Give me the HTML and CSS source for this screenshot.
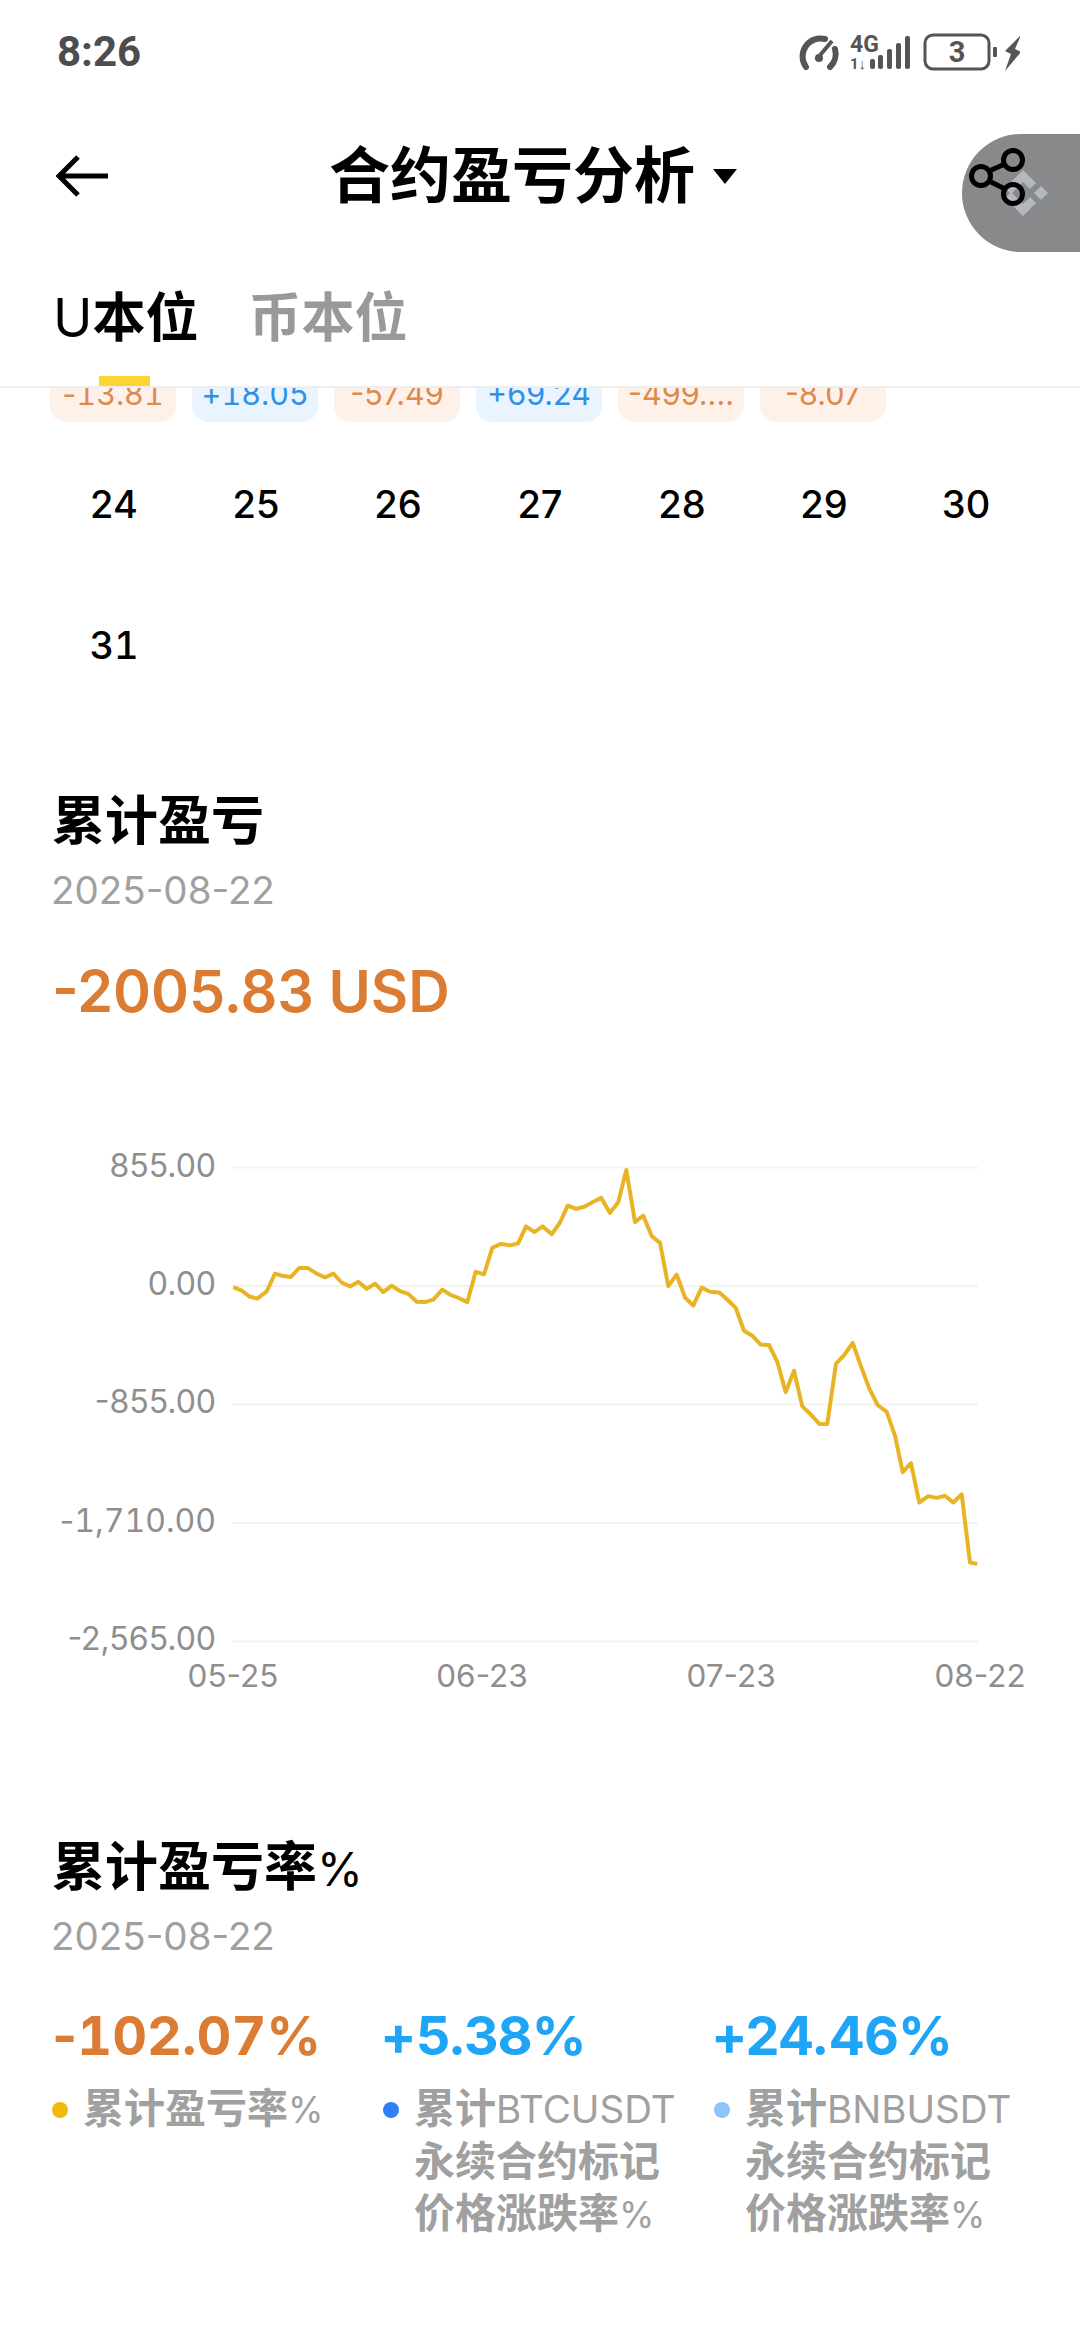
FILE: index.html
```html
<!DOCTYPE html>
<html>
<head>
	<meta charset='utf-8'>
	<title>合约盈亏分析</title>
	<link rel="stylesheet" href="styles.css">
</head>
<body>

	<div class="status">
		<span class="time">8:26</span>
		<svg class="status-icons" width="230" height="40" viewBox="790 30 230 40">
			<!-- gauge -->
			<path d="M806 65 A18 18 0 0 1 825 37" class="st-line"/>
			<path d="M835 47 A18 18 0 0 1 830 65" class="st-line"/>
			<path d="M816 58 L832 39" class="st-needle"/>
			<circle cx="819" cy="56" r="4" class="st-fill"/>
			<!-- network -->
			<text x="850" y="50" class="st-net">4G</text>
			<text x="850" y="67" class="st-net-small">1↓</text>
			<rect x="870" y="57" width="5" height="10" rx="2" class="st-fill"/>
			<rect x="878" y="53" width="5" height="14" rx="2" class="st-fill"/>
			<rect x="887" y="47" width="5" height="20" rx="2" class="st-fill"/>
			<rect x="896" y="41" width="5" height="26" rx="2" class="st-fill"/>
			<rect x="905" y="34" width="5" height="33" rx="2" class="st-fill"/>
			<!-- battery -->
			<rect x="925" y="33" width="64" height="34" rx="8" class="st-batt"/>
			<text x="957" y="60" class="st-level">3</text>
			<rect x="993" y="45" width="4" height="10" rx="1" class="st-fill"/>
			<path d="M1021 33 L1005 49 L1011 52 L1005 69 L1021 50 L1015 47 Z" class="st-fill"/>
		</svg>
	</div>

	<div class="header">
		<svg class="back" width="54" height="44" viewBox="0 0 54 44">
			<path d="M52 22 H4 M22 3 L3 22 L22 41" />
		</svg>
		<div class="title">合约盈亏分析<span class="caret"></span></div>
	</div>

	<div class="float-btn">
		<svg width="118" height="118" viewBox="962 134 118 118">
			<g class="bn-logo">
				<path d="M1023 170 L1036 183 L1030 189 L1023 182 L1011 194 L1005 188 Z"/>
				<path d="M1023 216 L1036 203 L1030 197 L1023 204 L1011 192 L1005 198 Z"/>
				<path d="M1041 186 L1048 193 L1041 200 L1034 193 Z"/>
			</g>
			<g class="share">
				<circle cx="1013" cy="160" r="9.5"/>
				<circle cx="981" cy="176" r="9.5"/>
				<circle cx="1013" cy="194" r="9.5"/>
				<path d="M989 171 L1005 164 M989 181 L1005 189"/>
			</g>
		</svg>
	</div>

	<div class="tabs">
		<div class="tab active"><span class="latin">U</span>本位<i class="tab-bar"></i></div>
		<div class="tab">币本位</div>
	</div>

	<div class="chips">
		<div class="chip loss">-<span class="tnum">13.81</span></div>
		<div class="chip gain">+<span class="tnum">18.05</span></div>
		<div class="chip loss">-57.49</div>
		<div class="chip gain">+69.24</div>
		<div class="chip loss">-499....</div>
		<div class="chip loss">-8.07</div>
	</div>

	<div class="days">
		<div>24</div><div>25</div><div>26</div><div>27</div><div>28</div><div>29</div><div>30</div>
		<div class="tnum">31</div>
	</div>

	<h2 class="sec-title first">累计盈亏</h2>
	<div class="sec-date">2025-08-22</div>
	<div class="big-value">-2005.83 USD</div>

	<svg class="chart" width="1080" height="580" viewBox="0 1120 1080 580">
		<g class="grid">
			<path d="M232 1167.5 H978 M232 1286 H978 M232 1404.5 H978 M232 1523 H978 M232 1641.5 H978"/>
		</g>
		<g class="y-axis">
			<text x="216" y="1177">855.00</text>
			<text x="216" y="1295">0.00</text>
			<text x="216" y="1413">-855.00</text>
			<text x="216" y="1532">-<tspan class="tnum">1,710.00</tspan></text>
			<text x="216" y="1650">-2,565.00</text>
		</g>
		<g class="x-axis">
			<text x="233" y="1687">05-25</text>
			<text x="482" y="1687">06-23</text>
			<text x="731" y="1687">07-23</text>
			<text x="980" y="1687">08-22</text>
		</g>
		<polyline class="pnl-line" points="233.3,1287.1 241.7,1290.7 250,1296.8 257.3,1298.6 266.7,1291.4 275,1273.6 283.3,1276.1 290.7,1277.1 299.3,1267.9 307.7,1267.9 316.7,1273.6 325,1277.5 333.3,1273.6 341.7,1282.5 350,1286.4 358.3,1281.8 366.7,1288.9 375,1283.6 383.3,1292.1 391.7,1285.7 400,1291.1 408.3,1293.9 416.7,1301.8 425,1302.1 433.3,1299.6 442.3,1289.6 450.7,1295 459,1298.2 467.3,1302.1 475.7,1271.8 484,1274.3 492.3,1247.9 500.7,1243.9 510,1245.4 518.3,1243.2 526,1226.4 534.3,1232.1 542.7,1226.4 551.7,1234.3 560,1222.5 567.7,1205.7 576,1208.9 584.3,1206.8 593.3,1201.8 601.3,1197.9 610,1212.9 618.3,1202.1 626.3,1170 635,1222.1 643.3,1215.7 651.7,1236.1 660,1242.9 668.3,1286.1 676.7,1274.6 685,1297.5 693.3,1305.7 701.7,1287.5 710,1291.8 719.3,1292.5 727.7,1300 735.7,1307.9 744,1330.7 752.3,1335.7 760.7,1344.6 769,1345 777.3,1361.8 785.7,1392.1 794,1370.7 802.3,1406.4 810.7,1414.3 819.3,1423.9 827.3,1423.9 836,1363.6 844.3,1355 852.7,1342.9 861,1366.4 869.3,1388.6 877.7,1405 886.7,1411.8 895,1435.7 902.7,1472.1 911,1463.2 919.3,1502.5 928.3,1496.1 936.7,1497.9 945,1495.7 953.3,1502.5 961.7,1494.3 970,1562.5 977.3,1563.9"/>
	</svg>

	<h2 class="sec-title second">累计盈亏率<span class="pct">%</span></h2>
	<div class="sec-date">2025-08-22</div>

	<div class="rates">
		<div class="rate">
			<div class="rate-value orange">-<span class="tnum">102.07</span>%</div>
			<div class="rate-label"><i class="dot dot-yellow"></i><div>累计盈亏率<span class="pct">%</span></div></div>
		</div>
		<div class="rate">
			<div class="rate-value blue">+5.38%</div>
			<div class="rate-label"><i class="dot dot-blue"></i><div>累计<span class="latin">BTCUSDT</span><br>永续合约标记<br>价格涨跌率<span class="pct">%</span></div></div>
		</div>
		<div class="rate">
			<div class="rate-value blue">+24.46%</div>
			<div class="rate-label"><i class="dot dot-light"></i><div>累计<span class="latin">BNBUSDT</span><br>永续合约标记<br>价格涨跌率<span class="pct">%</span></div></div>
		</div>
	</div>

</body>
</html>
```

FILE: styles.css
```css
*{
	box-sizing: border-box;
}
body{
	margin: 0;
	width: 1080px;
	height: 2340px;
	overflow: hidden;
	background-color: #fff;
	color: #000;
	font-family: Inter, "Noto Sans CJK SC", sans-serif;
}
.latin{
	font-weight: 400;
	line-height: 0;
}
.pct{
	font-size: 0.88em;
	font-weight: 400;
	line-height: 0;
}
.tnum{
	font-variant-numeric: tabular-nums;
}

/* status bar */
.status{
	height: 104px;
	padding: 32px 60px 0 57px;
	display: flex;
	justify-content: space-between;
	align-items: flex-start;
}
.time{
	font-family: Roboto, sans-serif;
	font-size: 42px;
	font-weight: 700;
	line-height: 40px;
	color: #4d4d4d;
}
.st-line{
	fill: none;
	stroke: #555;
	stroke-width: 6;
	stroke-linecap: round;
}
.st-needle{
	fill: none;
	stroke: #555;
	stroke-width: 4;
}
.st-fill{
	fill: #555;
}
.st-batt{
	fill: none;
	stroke: #555;
	stroke-width: 3;
}
.st-net{
	font-family: Roboto, sans-serif;
	font-size: 23px;
	font-weight: 700;
	fill: #555;
}
.st-net-small{
	font-family: Roboto, sans-serif;
	font-size: 15px;
	font-weight: 700;
	fill: #555;
}
.st-level{
	font-family: Roboto, sans-serif;
	font-size: 29px;
	font-weight: 700;
	fill: #555;
	text-anchor: middle;
}

/* header */
.header{
	height: 144px;
	padding-left: 56px;
	display: flex;
	align-items: center;
}
.back{
	flex: none;
}
.back path{
	fill: none;
	stroke: #000;
	stroke-width: 5;
}
.title{
	margin-left: 219px;
	font-size: 61px;
	line-height: 70px;
	font-weight: 700;
	display: flex;
	align-items: center;
}
.caret{
	margin-left: 18px;
	width: 0;
	height: 0;
	border-left: 12px solid transparent;
	border-right: 12px solid transparent;
	border-top: 15px solid #000;
}
.float-btn{
	position: absolute;
	left: 962px;
	top: 134px;
	width: 118px;
	height: 118px;
	border-radius: 59px 0 0 59px;
	background-color: #87898b;
}
.float-btn svg{
	display: block;
}
.bn-logo{
	fill: #b4b8bd;
}
.share{
	fill: none;
	stroke: #000;
	stroke-width: 5;
}

/* tabs */
.tabs{
	height: 140px;
	padding: 44px 0 0 53px;
	display: flex;
	gap: 50px;
	border-bottom: 2px solid #eee;
	font-size: 53px;
	line-height: 52px;
	font-weight: 700;
	color: #999;
}
.tab{
	position: relative;
	height: 94px;
}
.tab.active{
	color: #000;
}
.tab-bar{
	position: absolute;
	left: 46px;
	bottom: 0;
	width: 51px;
	height: 10px;
	background-color: #fcd535;
}

/* calendar */
.chips{
	height: 34px;
	padding-left: 50px;
	display: flex;
	align-items: flex-end;
	gap: 16px;
	overflow: hidden;
}
.chip{
	flex: none;
	width: 126px;
	height: 84px;
	padding-top: 39px;
	border-radius: 16px;
	font-size: 30.5px;
	line-height: 34px;
	text-align: center;
	margin-top: -50px;
}
.chip.loss{
	background-color: #fdf1e9;
	color: #dd8a4c;
}
.chip.gain{
	background-color: #e9f4fe;
	color: #2f90e8;
}
.days{
	margin-top: 12px;
	padding-left: 43px;
	display: grid;
	grid-template-columns: repeat(7, 142px);
	grid-auto-rows: 141px;
	font-size: 38px;
	font-weight: 500;
	text-align: center;
	line-height: 141px;
}

/* sections */
.sec-title{
	margin: 0 0 0 52px;
	font-size: 53px;
	line-height: 60px;
	font-weight: 700;
}
.sec-title.first{
	margin-top: 75px;
}
.sec-title.second{
	margin-top: 137px;
}
.sec-date{
	margin: 17px 0 0 51px;
	font-size: 38.5px;
	line-height: 44px;
	color: #a0a0a0;
}
.big-value{
	margin: 47px 0 0 52px;
	font-size: 57.5px;
	line-height: 64px;
	font-weight: 600;
	color: #dc7c33;
}

/* chart */
.chart{
	display: block;
	margin-top: 97px;
}
.grid path{
	fill: none;
	stroke: #f3f3f3;
	stroke-width: 2;
}
.y-axis text{
	font-size: 32px;
	fill: #8e8e8e;
	text-anchor: end;
}
.x-axis text{
	font-size: 31.5px;
	fill: #8e8e8e;
	text-anchor: middle;
}
.pnl-line{
	fill: none;
	stroke: #e8b425;
	stroke-width: 4;
	stroke-linejoin: round;
}

/* rates */
.rates{
	margin-top: 46px;
	padding-left: 52px;
	display: grid;
	grid-template-columns: repeat(3, 331px);
}
.rate-value{
	font-size: 54px;
	line-height: 64px;
	font-weight: 700;
	letter-spacing: -1px;
}
.rate-value.orange{
	letter-spacing: 0;
	color: #dc7c33;
}
.rate-value.blue{
	margin-left: -3px;
	color: #1fa5f5;
}
.rate-label{
	margin-top: 14px;
	display: flex;
	gap: 15px;
	font-size: 41px;
	line-height: 52.5px;
	font-weight: 700;
	color: #a0a0a0;
}
.rate-label .latin{
	font-size: 38.5px;
}
.dot{
	flex: none;
	width: 16px;
	height: 16px;
	margin-top: 20px;
	border-radius: 50%;
}
.dot-yellow{
	background-color: #f0b90b;
}
.dot-blue{
	background-color: #2f80f5;
}
.dot-light{
	background-color: #8cc4fb;
}
```
